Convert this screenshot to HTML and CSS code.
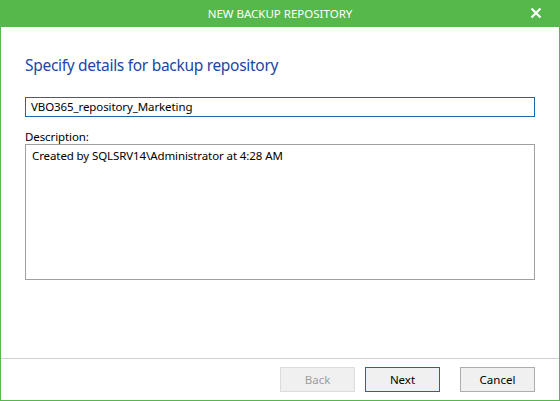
FILE: index.html
```html
<!DOCTYPE html>
<html>
<head>
<meta charset="utf-8">
<link rel="stylesheet" href="styles.css">
</head>
<body>
<div class="window">
  <div class="titlebar">
    <span class="title">NEW BACKUP REPOSITORY</span>
    <svg class="close" width="12" height="12" viewBox="0 0 12 12"><path d="M1.5 1.5 L10.5 10.5 M10.5 1.5 L1.5 10.5" stroke="#fff" stroke-width="2.2" fill="none"/></svg>
  </div>
  <div class="content">
    <h1 class="heading">Specify details for backup repository</h1>
    <div class="textbox">VBO365_repository_Marketing</div>
    <div class="label">Description:</div>
    <div class="textarea">Created by SQLSRV14\Administrator at 4:28 AM</div>
  </div>
  <div class="footer">
    <button class="btn disabled">Back</button>
    <button class="btn primary">Next</button>
    <button class="btn cancel">Cancel</button>
  </div>
</div>
</body>
</html>
```
FILE: styles.css
```css
html, body {
  margin: 0;
  padding: 0;
  background: #ffffff;
}
body {
  font-family: "Noto Sans", "Open Sans", sans-serif;
  font-size: 11.5px;
  letter-spacing: -0.1px;
  color: #000;
}
.window {
  width: 560px;
  height: 401px;
  box-sizing: border-box;
  border: 1px solid #55b84b;
  border-top: none;
  display: flex;
  flex-direction: column;
  background: #fff;
}
.titlebar {
  height: 27px;
  margin: 0 -1px;
  background: #55b84b;
  position: relative;
  display: flex;
  align-items: center;
  justify-content: center;
  flex: none;
}
.title {
  color: #fff;
  font-size: 11.5px;
  letter-spacing: 0;
  line-height: 27px;
}
.close {
  position: absolute;
  right: 18px;
  top: 7px;
}
.content {
  flex: 1;
  padding: 0 24px;
  display: flex;
  flex-direction: column;
}
.heading {
  margin: 27px 0 0 0;
  font-weight: normal;
  font-size: 15.5px;
  letter-spacing: -0.3px;
  line-height: 22px;
  color: #1b46a8;
}
.textbox {
  margin-top: 21px;
  height: 20px;
  border: 1px solid #1a66b0;
  padding: 0 5px;
  line-height: 18px;
  box-sizing: border-box;
}
.label {
  margin-top: 12px;
  line-height: 15px;
  height: 15px;
}
.textarea {
  height: 136px;
  box-sizing: border-box;
  border: 1px solid #a0a0a0;
  padding: 3px 6px;
  line-height: 16px;
}
.footer {
  flex: none;
  height: 42px;
  border-top: 1px solid #d0d0d0;
  display: flex;
  justify-content: flex-end;
  align-items: flex-start;
  padding: 8px 24px 0 0;
  box-sizing: border-box;
  margin-top: auto;
}
.btn {
  width: 75px;
  height: 25px;
  box-sizing: border-box;
  background: #f0f0f0;
  border: 1px solid #adadad;
  font-family: "Noto Sans", "Open Sans", sans-serif;
  font-size: 11.5px;
  color: #000;
  padding: 0;
  margin: 0;
}
.btn.disabled {
  border-color: #dcdcdc;
  color: #9d9d9d;
  background: #f0f0f0;
}
.btn.primary {
  margin-left: 10px;
  border-color: #1a66b0;
}
.btn.cancel {
  margin-left: 20px;
}
```
